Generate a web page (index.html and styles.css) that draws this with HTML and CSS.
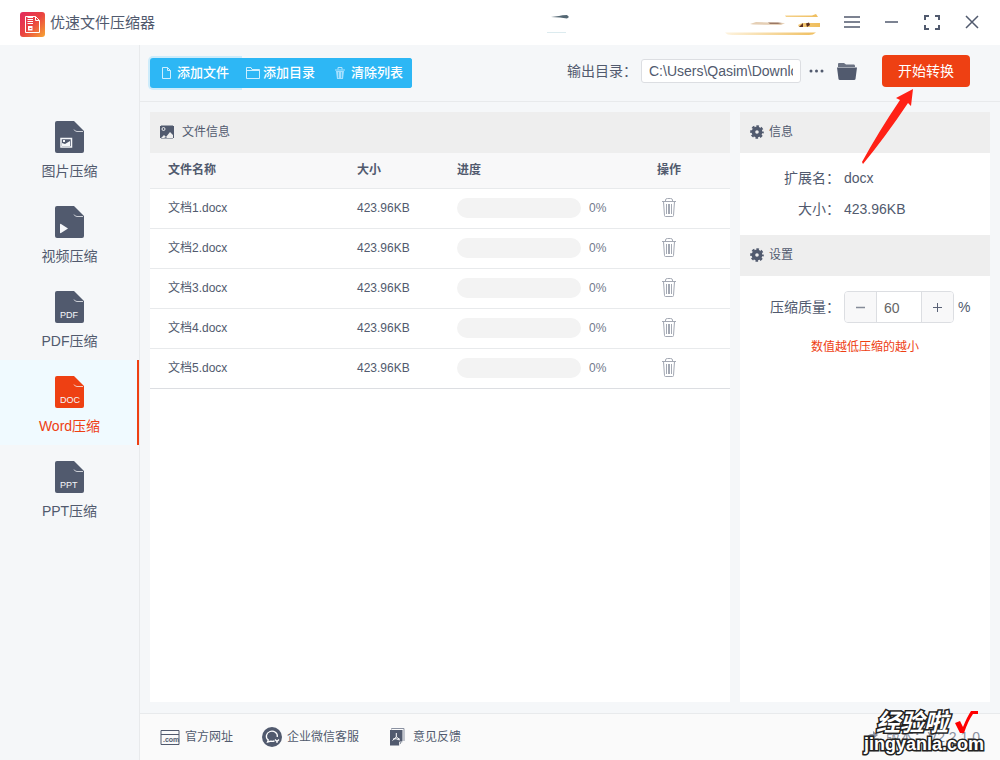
FILE: index.html
```html
<!DOCTYPE html>
<html lang="zh-CN">
<head>
<meta charset="utf-8">
<meta name="viewport" content="width=device-width, initial-scale=1">
<title>优速文件压缩器</title>
<link rel="stylesheet" href="styles.css">
</head>
<body>
<svg class="defs" width="0" height="0" aria-hidden="true">
  <symbol id="file" viewBox="0 0 29 32">
    <path fill="currentColor" d="M2 0H19L29 10V30a2 2 0 0 1-2 2H2a2 2 0 0 1-2-2V2a2 2 0 0 1 2-2z"/>
    <path fill="none" stroke="#f5f7fa" stroke-width="1" opacity=".75" d="M19 8.500Q20 10.500 22 10.500H28"/>
  </symbol>
  <symbol id="bin" viewBox="0 0 14 20">
    <g fill="none" stroke="currentColor" stroke-width="1"><path d="M0 3.500H14M3.500 3V2Q3.500 .5 5.500 .5H8.500Q10.500 .5 10.500 2V3M1.500 3.500L2.500 17.500Q2.500 18.500 3.500 18.500H10.500Q11.500 18.500 11.500 17.500L12.500 3.500M4.500 6V16M6.500 6V16M7.500 6V16M9.500 6V16"/></g>
  </symbol>
  <symbol id="gear" viewBox="0 0 14 14">
    <g fill="none" stroke="currentColor"><circle cx="7" cy="7" r="3.600" stroke-width="3.600"/><circle cx="7" cy="7" r="5.800" stroke-width="2" stroke-dasharray="2.600 1.955" stroke-dashoffset="1.300"/></g>
  </symbol>
</svg>
<div class="app">
  <header class="titlebar">
    <svg class="logo" width="25" height="25" viewBox="0 0 25 25">
      <defs><linearGradient id="lg" x1="0" y1="0" x2="1" y2="1"><stop offset="0" stop-color="#e3295f"/><stop offset=".5" stop-color="#ea4440"/><stop offset="1" stop-color="#f7a634"/></linearGradient></defs>
      <rect width="25" height="25" rx="3" fill="url(#lg)"/>
      <path d="M5.500 4.500H15.500L19.500 8.500V20.500H5.500zM15.500 4.500V8.500H19.500" fill="none" stroke="#fff" stroke-width="1"/>
      <path d="M7.500 5.500H13M7.500 7.500H13M7.500 9.500H13M7.500 11.500H13" stroke="#fff" stroke-width="1"/>
      <path d="M8 14H12.500V18.500H8z" fill="#fff"/><path d="M9.500 16.500H11.500" stroke="#ea4440"/>
    </svg>
    <h1 class="title">优速文件压缩器</h1>
    <svg class="smudge" width="24" height="20" viewBox="0 0 24 20"><path d="M4 4 12 3Q15 2 20 2L22 4 20 5.500 13 4.500z" fill="#546773"/><path d="M0 19.500H19" stroke="#dcebef"/></svg>
    <svg class="banner" width="96" height="24" viewBox="0 0 96 24">
      <defs><linearGradient id="gold"><stop offset="0" stop-color="#fdf3df"/><stop offset="1" stop-color="#efbd5b"/></linearGradient></defs>
      <path d="M60 4.500H87L91 3 93 6H61zM73 14Q76 12 79 12H95V16H74zM0 21.500H91Q88 24 84 24H7Q2 24 0 21.500z" fill="url(#gold)"/>
      <path d="M25 13 31 11 60 12 56 14 28 13.500z" fill="#e5cfb5"/><path d="M43 11.500H53L57 12 53 13H45z" fill="#9b7864"/><path d="M74 16 78 12V16zM81 12.500 84 11.500 85 14 82 16" fill="#5d301f"/>
    </svg>
    <nav class="window-controls" aria-label="窗口">
      <button aria-label="菜单"><svg width="16" height="16" viewBox="0 0 16 16"><path d="M0 2H16M0 7H16M0 12H16"/></svg></button>
      <button aria-label="最小化"><svg width="16" height="16" viewBox="0 0 16 16"><path d="M1 7H14"/></svg></button>
      <button aria-label="最大化"><svg width="16" height="16" viewBox="0 0 16 16"><path class="thick" d="M1 5V1H5M11 1H15V5M15 10V14H11M5 14H1V10"/></svg></button>
      <button aria-label="关闭"><svg width="16" height="16" viewBox="0 0 16 16"><path d="M2 1 14 13M14 1 2 13"/></svg></button>
    </nav>
  </header>

  <div class="body">
    <nav class="sidebar" aria-label="压缩类型">
      <a class="side-item" href="#image"><svg width="29" height="32"><use href="#file"/><path d="M6 17.500H16.500V26H6z" fill="none" stroke="#f5f7fa" stroke-width="1.500"/><path d="M7 25V22L10 23 15 20V25zM8 19H10V21H8z" fill="#f5f7fa"/></svg>图片压缩</a>
      <a class="side-item" href="#video"><svg width="29" height="32"><use href="#file"/><path d="M5 18.500Q5 17.500 6 18L13 22.500 6 27Q5 27.500 5 26.500z" fill="#f5f7fa"/></svg>视频压缩</a>
      <a class="side-item" href="#pdf"><svg width="29" height="32"><use href="#file"/><text x="5" y="27">PDF</text></svg>PDF压缩</a>
      <a class="side-item active" href="#word" aria-current="page"><svg width="29" height="32"><use href="#file"/><text x="5" y="27">DOC</text></svg>Word压缩</a>
      <a class="side-item" href="#ppt"><svg width="29" height="32"><use href="#file"/><text x="5" y="27">PPT</text></svg>PPT压缩</a>
    </nav>

    <div class="content">
      <div class="toolbar">
        <div class="actions">
          <button class="focused"><svg width="9" height="12" viewBox="0 0 9 12"><path d="M.5 .5H5.500L8.500 3.500V11.500H.5zM5.500 .5V3.500H8.500" fill="none" stroke="#cceeff"/></svg>添加文件</button>
          <button class="folder"><svg width="14" height="12" viewBox="0 0 14 12"><path d="M.5 .5H5L6 2.500H13.500V11.500H.5zM.5 3.500H13" fill="none" stroke="#cceeff"/></svg>添加目录</button>
          <button class="clear"><svg width="10" height="12" viewBox="0 0 10 12"><path d="M0 3H10M3 2.500V.5H7V2.500" fill="none" stroke="#b3e5ff"/><path d="M1 4H9L8 12H2z" fill="#a5e0ff"/><path d="M3.500 5V11M6.500 5V11" stroke="#5cc7f8"/></svg>清除列表</button>
        </div>
        <div class="output">
          <label for="outdir">输出目录：</label>
          <input id="outdir" type="text" value="C:\Users\Qasim\Downloads">
          <button class="plain more" aria-label="浏览"><svg width="15" height="4" viewBox="0 0 15 4"><circle cx="2" cy="2" r="1.500"/><circle cx="7.500" cy="2" r="1.500"/><circle cx="13" cy="2" r="1.500"/></svg></button>
          <button class="plain open" aria-label="打开目录"><svg width="20" height="17" viewBox="0 0 20 17"><path d="M1 4V1Q1 0 2 0H7L9 1.500H17Q18 1.500 18 3V4z" opacity=".85"/><path d="M0 4.500H20L18.500 16Q18.400 17 17 17H3Q1.600 17 1.500 16z"/></svg></button>
          <button class="start">开始转换</button>
        </div>
      </div>

      <main class="panels">
        <section class="panel files">
          <h2 class="panel-head"><svg width="14" height="14" viewBox="0 0 14 14"><path fill="currentColor" d="M1 .5H13V13.500H1zM0 1H14V13H0z"/><circle cx="3.500" cy="4" r="1.500" fill="none" stroke="#eee"/><path d="M1 13 4 10 6 12 10 7 13 10V13z" fill="#eee"/><path d="M4 13 6 12 7 13z" fill="currentColor"/></svg>文件信息</h2>
          <table>
            <colgroup><col class="c-name"><col class="c-size"><col class="c-prog"><col class="c-op"></colgroup>
            <thead><tr><th>文件名称</th><th>大小</th><th>进度</th><th>操作</th></tr></thead>
            <tbody>
              <tr><td>文档1.docx</td><td>423.96KB</td><td><div class="prog"><span class="bar"></span>0%</div></td><td><button class="plain del" aria-label="删除文档1"><svg width="14" height="20"><use href="#bin"/></svg></button></td></tr>
              <tr><td>文档2.docx</td><td>423.96KB</td><td><div class="prog"><span class="bar"></span>0%</div></td><td><button class="plain del" aria-label="删除文档2"><svg width="14" height="20"><use href="#bin"/></svg></button></td></tr>
              <tr><td>文档3.docx</td><td>423.96KB</td><td><div class="prog"><span class="bar"></span>0%</div></td><td><button class="plain del" aria-label="删除文档3"><svg width="14" height="20"><use href="#bin"/></svg></button></td></tr>
              <tr><td>文档4.docx</td><td>423.96KB</td><td><div class="prog"><span class="bar"></span>0%</div></td><td><button class="plain del" aria-label="删除文档4"><svg width="14" height="20"><use href="#bin"/></svg></button></td></tr>
              <tr><td>文档5.docx</td><td>423.96KB</td><td><div class="prog"><span class="bar"></span>0%</div></td><td><button class="plain del" aria-label="删除文档5"><svg width="14" height="20"><use href="#bin"/></svg></button></td></tr>
            </tbody>
          </table>
        </section>
        <aside class="panel side">
          <h2 class="panel-head near"><svg width="14" height="14"><use href="#gear"/></svg>信息</h2>
          <dl class="info">
            <dt>扩展名：</dt><dd>docx</dd>
            <dt>大小：</dt><dd>423.96KB</dd>
          </dl>
          <h2 class="panel-head near"><svg width="14" height="14"><use href="#gear"/></svg>设置</h2>
          <div class="quality">
            <label for="quality">压缩质量：</label>
            <div class="stepper">
              <button aria-label="减少"><svg width="11" height="11" viewBox="0 0 11 11"><path d="M1 5.500H10" stroke="#858b99" stroke-width="1.500"/></svg></button>
              <input id="quality" type="text" inputmode="numeric" value="60">
              <button aria-label="增加"><svg width="11" height="11" viewBox="0 0 11 11"><path d="M1 5.500H10M5.500 1V10" stroke="#596176"/></svg></button>
            </div>
            <span>%</span>
          </div>
          <p class="hint">数值越低压缩的越小</p>
        </aside>
      </main>

      <footer class="footer">
        <a href="#site"><svg width="20" height="15" viewBox="0 0 20 15"><path d="M1 .5H19V14.500H1zM1 4.500H19" fill="none" stroke="currentColor"/><text class="com" x="3" y="12">.com</text></svg>官方网址</a>
        <a href="#service"><svg width="20" height="20" viewBox="0 0 20 20"><circle cx="10" cy="10" r="10" fill="currentColor"/><path d="M12.500 13.800Q11 14.500 9 14.200L5.500 15 6.300 13A5.500 5 0 1 1 15.300 10" fill="none" stroke="#fff" stroke-width="1.300"/><path d="M13 12.500 15 14.500M17 12.500 15 14.500M15 14.500V16" stroke="#fff" fill="none" stroke-width="1.200"/></svg>企业微信客服</a>
        <a class="feedback" href="#feedback"><svg width="15" height="18" viewBox="0 0 15 18"><path d="M1.500 1.500V.5H14V13" fill="none" stroke="#8a91a1"/><path d="M0 2H12.500V13L9 17.500H0z" fill="currentColor"/><path d="M9.500 17V14H13" fill="none" stroke="#dfe1e6"/><path d="M6.300 5V9M2.500 12.500 6.300 9 10 11.500M3 11Q6 10 9.500 12" stroke="#fff" fill="none"/></svg>意见反馈</a>
        <span class="version"><svg width="14" height="14" viewBox="0 0 14 14"><path d="M1 9Q2 4 8 4V1L13 5 8 9V6Q4 6 1 9z" fill="currentColor"/></svg>版本：V2.2.1.0</span>
      </footer>
    </div>
  </div>

  <svg class="arrow" width="54" height="76" viewBox="0 0 54 76" aria-hidden="true"><path d="M52 0 35 9 39 11Q18 42 1 73L2 75Q25 47 47 14L50 17z" fill="#ff2116"/></svg>
  <div class="watermark">
    <div class="wm-top">经验啦<svg width="24" height="24" viewBox="0 0 24 24"><path d="M1 12 6 10 9 16Q13 6 17 0H24V3H19Q14 10 10 22H6z" fill="#f00" stroke="none"/></svg></div>
    <div class="wm-url">jingyanla.com</div>
  </div>
</div>
</body>
</html>
```

FILE: styles.css
```css
* { box-sizing: border-box; }

body {
  margin: 0;
  color: #515a6e;
  background: #f5f7f9;
  font: 12px/20px "Liberation Sans", "Noto Sans CJK SC", sans-serif;
}

button, input { font: inherit; color: inherit; }
button { border: 0; padding: 0; cursor: pointer; }
a { color: inherit; text-decoration: none; }
svg { display: block; flex: none; }
.defs { position: absolute; }

.app {
  position: relative;
  display: flex;
  flex-direction: column;
  min-height: 100vh;
}

.titlebar {
  display: flex;
  align-items: center;
  height: 45px;
  padding: 0 20px;
  background: #fff;
}
.logo { margin-top: 3px; }
.title {
  flex: 1;
  margin: 0 0 0 5px;
  font-size: 15px;
  font-weight: 400;
}
.smudge { margin-right: 154px; }
.banner { margin-right: 23px; }
.window-controls { display: flex; gap: 24px; }
.window-controls button { background: none; }
.window-controls path { fill: none; stroke: #515a6e; stroke-width: 1.5; }
.window-controls .thick { stroke-width: 2; }

.body { display: flex; flex: 1; }

.sidebar {
  flex: 0 0 140px;
  padding-top: 60px;
  border-right: 1px solid #e8eaec;
}
.side-item {
  display: flex;
  flex-direction: column;
  align-items: center;
  gap: 8px;
  height: 85px;
  padding-top: 16px;
  font-size: 14px;
}
.side-item text { fill: #f5f7fa; font-size: 9px; }
.side-item.active {
  color: #ee4013;
  background: #f0faff;
  box-shadow: inset -2px 0 #ee4013;
}

.content {
  display: flex;
  flex: 1;
  flex-direction: column;
  min-width: 0;
}

.toolbar {
  display: flex;
  align-items: flex-start;
  justify-content: space-between;
  height: 57px;
  padding: 10px 30px 0 10px;
  border-bottom: 1px solid #e8eaec;
}
.actions {
  display: flex;
  height: 30px;
  margin-top: 3px;
  border-radius: 3px;
  background: #2db7f5;
}
.actions button {
  display: flex;
  align-items: center;
  gap: 6px;
  width: 90px;
  padding-left: 12px;
  color: #fff;
  background: #2db7f5;
  font-size: 13px;
  font-weight: 500;
}
.actions .focused {
  border-radius: 3px 0 0 3px;
  box-shadow: 0 0 0 2px #cdecfb;
}
.actions .folder {
  position: relative;
  gap: 3px;
  width: 86px;
  padding-left: 6px;
}
.actions .clear {
  position: relative;
  width: 86px;
  padding-left: 9px;
  border-radius: 0 3px 3px 0;
}
.output { display: flex; align-items: center; font-size: 14px; }
.output label { margin-right: 4px; }
.output input {
  width: 160px;
  height: 24px;
  padding: 0 7px;
  border: 1px solid #dcdee2;
  border-radius: 3px;
  background: #fff;
}
.plain { background: none; }
.plain svg { fill: currentColor; }
.more { margin-left: 8px; }
.open { margin-left: 13px; }
.start {
  width: 88px;
  height: 32px;
  margin-left: 25px;
  border-radius: 4px;
  color: #fff;
  background: #ee4013;
}

.panels {
  display: grid;
  flex: 1;
  grid-template-columns: minmax(0, 1fr) 250px;
  gap: 10px;
  padding: 10px 10px 11px;
}
.panel { background: #fff; }
.panel-head {
  display: flex;
  align-items: center;
  gap: 8px;
  height: 41px;
  margin: 0;
  padding: 0 10px 2px;
  background: #eee;
  font-size: 12px;
  font-weight: 400;
}
.panel-head.near { gap: 5px; }

table {
  width: 100%;
  table-layout: fixed;
  border-collapse: collapse;
}
.c-name { width: 189px; }
.c-size { width: 100px; }
.c-op { width: 91px; }
th, td {
  height: 40px;
  padding: 0 18px;
  border-bottom: 1px solid #e8eaec;
  text-align: left;
}
th { height: 35px; background: #f8f8f9; }
tbody tr:last-child td { border-color: #dcdee2; }
th + th, td + td { padding: 0 0 0 18px; }
.prog { display: flex; align-items: center; gap: 8px; color: #737a8c; }
.bar {
  width: 124px;
  height: 20px;
  border-radius: 10px;
  background: #f3f3f3;
}
.del { display: block; margin-left: 5px; color: #a3a8b3; }
.del svg { fill: none; }

.info {
  display: grid;
  grid-template-columns: 100px 1fr;
  gap: 11px 4px;
  margin: 0;
  padding: 15px 0 16px;
  font-size: 14px;
}
.info dt { text-align: right; }
.info dd { margin: 0; }
.quality {
  display: flex;
  align-items: center;
  gap: 4px;
  padding: 15px 0 0 30px;
  font-size: 14px;
}
.stepper {
  display: flex;
  height: 32px;
  overflow: hidden;
  border: 1px solid #dcdee2;
  border-radius: 4px;
}
.stepper button {
  display: grid;
  place-items: center;
  width: 31px;
  background: #f8f8f9;
}
.stepper input {
  width: 46px;
  padding: 2px 7px 0;
  border: solid #dcdee2;
  border-width: 0 1px;
  color: #666;
}
.hint {
  margin: 14px 0 0;
  color: #ee4013;
  text-align: center;
}

.footer {
  display: flex;
  align-items: center;
  gap: 29px;
  height: 47px;
  padding: 0 20px;
  border-top: 1px solid #e8eaec;
  background: #fafafa;
}
.footer a, .version { display: flex; align-items: center; gap: 5px; }
.footer .feedback { gap: 8px; margin-left: 2px; }
.com { fill: currentColor; font-size: 7px; font-weight: 700; }
.version { margin-left: auto; gap: 7px; color: #8b91a0; font-size: 14px; }

.arrow { position: absolute; top: 89px; right: 85px; pointer-events: none; }
.watermark {
  position: absolute;
  right: 16px;
  bottom: 7px;
  color: #fff;
  font-weight: 700;
  -webkit-text-stroke: 3px #222;
  paint-order: stroke fill;
  pointer-events: none;
}
.wm-top {
  display: flex;
  justify-content: flex-end;
  gap: 6px;
  padding-right: 6px;
  font-size: 24px;
  font-style: italic;
  line-height: 24px;
}
.wm-url {
  font-family: "Liberation Sans", sans-serif;
  font-size: 18px;
  line-height: 18px;
}
```
